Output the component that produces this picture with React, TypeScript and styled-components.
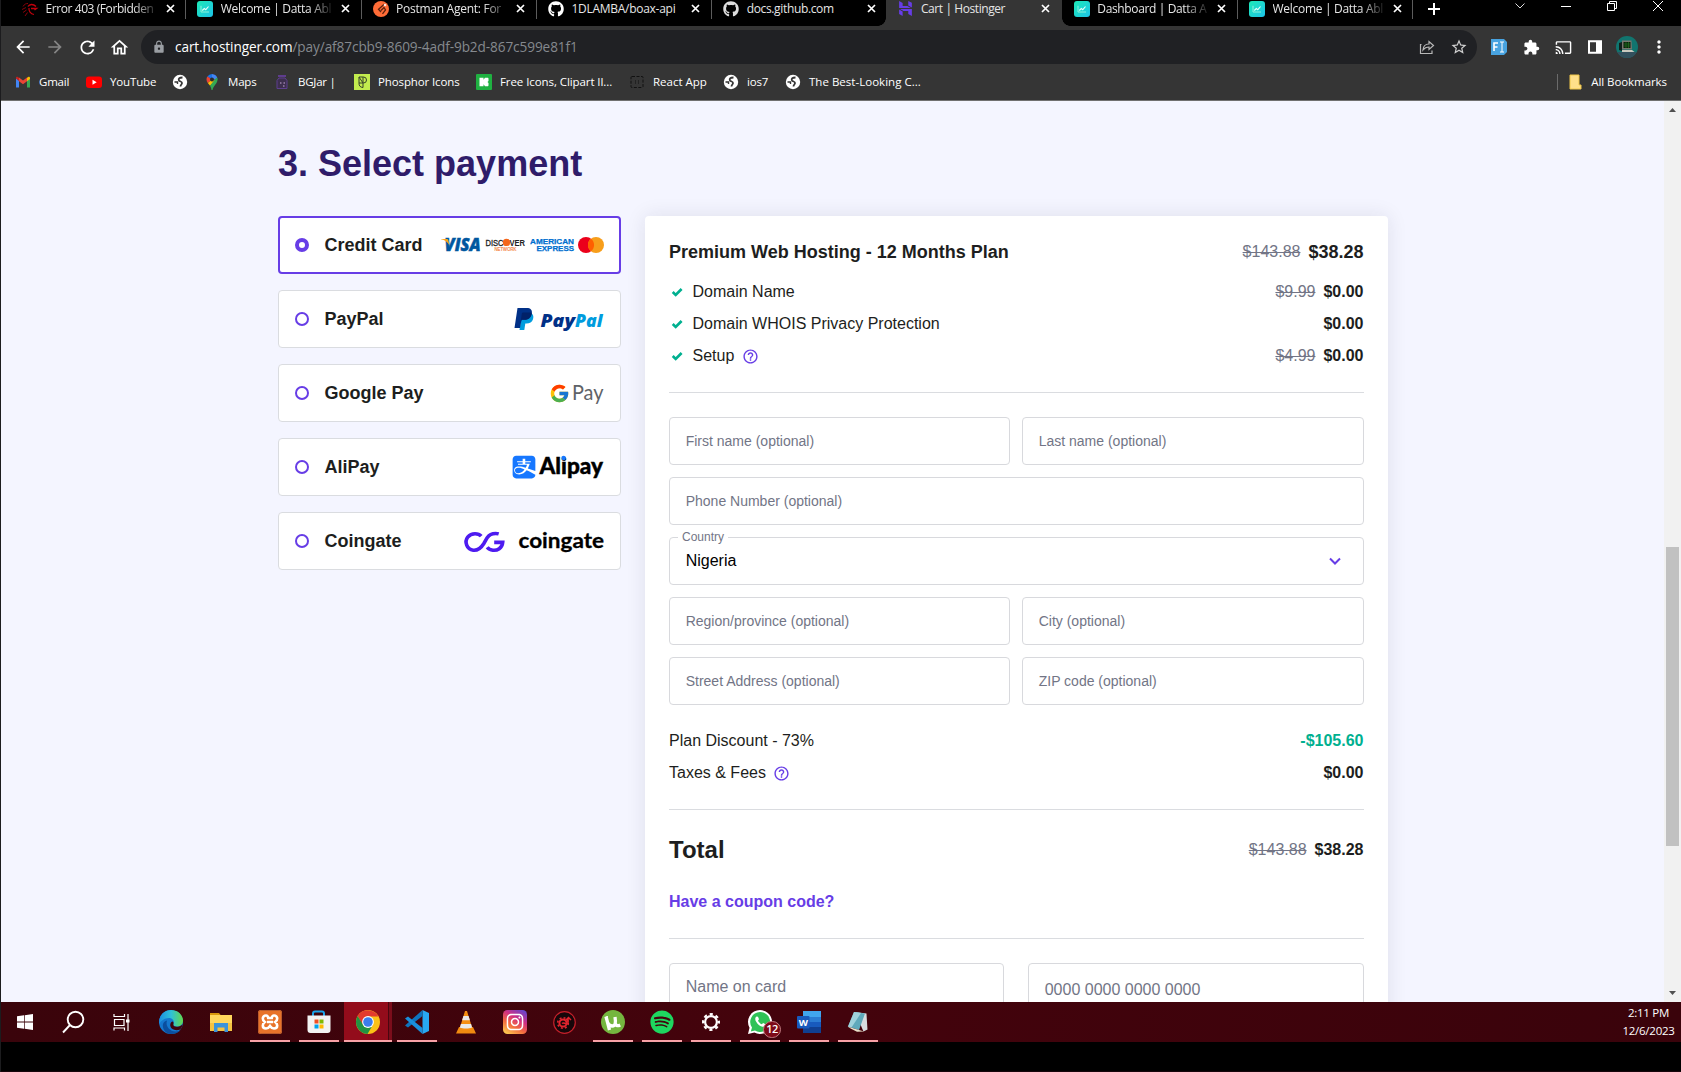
import React from "react";
import styled, { createGlobalStyle, css } from "styled-components";
import { FaGithub, FaSpotify, FaInstagram, FaAlipay } from "react-icons/fa";
import { FcGoogle } from "react-icons/fc";
import { MdArrowBack, MdArrowForward, MdRefresh, MdOutlineHome, MdLock, MdStarBorder, MdExtension, MdCast, MdMoreVert, MdHelpOutline } from "react-icons/md";
import { SiHostinger } from "react-icons/si";

const ui = `"Open Sans", "Noto Sans", sans-serif`;
const arial = `"Liberation Sans", Arial, sans-serif`;

const Global = createGlobalStyle`
  * { box-sizing: border-box; }
  body { margin: 0; background: #000; overflow: hidden; }
  svg { display: block; flex: none; overflow: visible; }
`;

const Screen = styled.div`
  width: 1681px;
  height: 1072px;
  border-left: 1px solid #1c1c1e;
  background: #000;
  display: flex;
  flex-direction: column;
  overflow: hidden;
`;

/* ---------- browser chrome ---------- */
const TabStrip = styled.div`
  height: 26px;
  flex: none;
  display: flex;
  padding-left: 9px;
  background: #000;
`;
const TabBox = styled.div<{ $active?: boolean; $line?: boolean }>`
  width: 175.3px;
  height: 26px;
  flex: none;
  display: flex;
  align-items: center;
  padding: 0 8px 9px 12px;
  position: relative;
  font: 12px/16px ${ui};
  color: #e6e6e6;
  ${(p) =>
    p.$active &&
    css`
      background: #353535;
      &::before,
      &::after {
        content: "";
        position: absolute;
        bottom: 0;
        width: 8px;
        height: 8px;
      }
      &::before { left: -8px; background: radial-gradient(circle at 0 0, transparent 7.5px, #353535 8px); }
      &::after { right: -8px; background: radial-gradient(circle at 100% 0, transparent 7.5px, #353535 8px); }
    `}
  ${(p) =>
    p.$line &&
    css`
      &::after {
        content: "";
        position: absolute;
        top: 0;
        right: -1px;
        width: 1px;
        height: 19px;
        background: #5c5c5c;
      }
    `}
`;
const TabTitle = styled.span<{ $fade?: boolean; $ls: number }>`
  width: 112px;
  margin-left: 7.5px;
  white-space: nowrap;
  letter-spacing: ${(p) => p.$ls}px;
  ${(p) => p.$fade && css`mask-image: linear-gradient(90deg, #000 78%, rgba(0, 0, 0, 0.1) 99%);`}
`;
const CloseX = styled.span`
  width: 9px;
  margin-left: 8px;
`;
const NewTab = styled.div`
  width: 44px;
  display: flex;
  justify-content: center;
  padding-top: 3px;
`;
const WindowButtons = styled.div`
  margin-left: auto;
  display: flex;
  height: 12px;
  align-items: center;
  svg { width: 46px; height: 12px; }
`;
const Toolbar = styled.div`
  height: 42px;
  flex: none;
  background: #353535;
  display: flex;
  align-items: center;
  padding: 4px 0 4px 6px;
  color: #fff;
`;
const ToolButton = styled.span<{ $dim?: boolean }>`
  width: 32px;
  height: 32px;
  display: flex;
  align-items: center;
  justify-content: center;
  color: ${(p) => (p.$dim ? "#858585" : "#fff")};
`;
const Omnibox = styled.div`
  width: 1336px;
  height: 34px;
  margin-left: 6px;
  border-radius: 17px;
  background: #202124;
  display: flex;
  align-items: center;
  padding: 0 2px 0 11px;
  font: 13.6px/20px ${ui};
  color: #9a9ea3;
  b { font-weight: 400; color: #fff; }
`;
const Url = styled.span`
  margin-left: 9px;
  letter-spacing: -0.09px;
  white-space: nowrap;
  color: #85898e;
`;
const OmniActions = styled.div`
  margin-left: auto;
  display: flex;
  color: #c8c8c8;
`;
const Extensions = styled.div`
  display: flex;
  margin-left: 6px;
`;
const Bookmarks = styled.div`
  height: 33px;
  flex: none;
  display: flex;
  align-items: center;
  padding: 0 14px 5px;
  background: #353535;
  border-bottom: 1px solid #707070;
  font: 11.5px/18px ${ui};
  color: #fff;
`;
const Bookmark = styled.div<{ $w: number; $ls?: number }>`
  width: ${(p) => p.$w}px;
  flex: none;
  display: flex;
  align-items: center;
  gap: 8px;
  white-space: nowrap;
  letter-spacing: ${(p) => p.$ls ?? -0.2}px;
`;
const AllBookmarks = styled.div`
  margin-left: auto;
  padding-left: 11px;
  display: flex;
  align-items: center;
  gap: 9px;
  border-left: 1px solid #6b6b6b;
  height: 16px;
  white-space: nowrap;
  letter-spacing: -0.07px;
`;

/* ---------- page ---------- */
const Viewport = styled.div`
  height: 901px;
  flex: none;
  display: flex;
  overflow: hidden;
  background: #f4f5ff;
  font-family: ${arial};
`;
const Page = styled.main`
  flex: 1;
  padding: 41px 0 0 277px;
  color: #1d1e20;
`;
const Heading = styled.h1`
  margin: 0 0 30px;
  font-size: 36px;
  line-height: 44px;
  font-weight: 700;
  color: #2f1c6a;
`;
const Columns = styled.div`
  display: flex;
  gap: 24px;
  align-items: flex-start;
`;
const Methods = styled.div`
  width: 343px;
  display: flex;
  flex-direction: column;
  gap: 16px;
`;
const Method = styled.div<{ $on?: boolean }>`
  height: 58px;
  border: ${(p) => (p.$on ? "2px solid #673de6" : "1px solid #dadce0")};
  border-radius: 4px;
  background: #fff;
  display: flex;
  align-items: center;
  justify-content: space-between;
  padding: 0 ${(p) => (p.$on ? 15 : 16)}px;
`;
const MethodName = styled.div`
  display: flex;
  align-items: center;
  gap: 15.5px;
  font-size: 18px;
  line-height: 24px;
  font-weight: 700;
  white-space: nowrap;
`;
const Radio = styled.span<{ $on?: boolean }>`
  width: 14px;
  height: 14px;
  border-radius: 50%;
  border: ${(p) => (p.$on ? 4 : 2)}px solid #673de6;
`;
const Logos = styled.div`
  display: flex;
  align-items: center;
`;

const Card = styled.section`
  width: 743px;
  height: 900px;
  padding: 24px;
  background: #fff;
  border-radius: 4px;
  box-shadow: 0 0 20px rgba(29, 30, 60, 0.1);
`;
const Line = styled.div<{ $h?: number; $mt?: number }>`
  display: flex;
  align-items: center;
  height: ${(p) => p.$h ?? 24}px;
  margin-top: ${(p) => p.$mt ?? 8}px;
  font-size: 16px;
  line-height: 24px;
  white-space: nowrap;
`;
const PlanName = styled.span`
  font-size: 18px;
  font-weight: 700;
`;
const CheckSlot = styled.span`
  width: 23.5px;
  padding-left: 2px;
`;
const Help = styled(MdHelpOutline)`
  margin-left: 7.5px;
  width: 17px;
  height: 17px;
  color: #673de6;
`;
const Price = styled.div<{ $big?: boolean; $green?: boolean }>`
  margin-left: auto;
  padding-right: 0.5px;
  display: flex;
  align-items: center;
  gap: 8px;
  s { color: #727586; }
  b { font-size: ${(p) => (p.$big ? 18 : 16)}px; color: ${(p) => (p.$green ? "#00b090" : "#1d1e20")}; }
`;
const Divider = styled.div`
  height: 1px;
  margin: 24px 0;
  background: #dadce0;
`;
const Fields = styled.div`
  display: grid;
  grid-template-columns: 341px 342px;
  gap: 12px;
`;
const Field = styled.div<{ $wide?: boolean }>`
  height: 48px;
  border: 1px solid #d8d9dd;
  border-radius: 4px;
  padding: 0 16px 0 15.7px;
  display: flex;
  align-items: center;
  justify-content: space-between;
  font-size: 14px;
  color: #727586;
  position: relative;
  ${(p) => p.$wide && css`grid-column: 1 / -1;`}
`;
const FloatLabel = styled.span`
  position: absolute;
  top: -9px;
  left: 8px;
  padding: 0 4px;
  background: #fff;
  font-size: 12px;
  line-height: 16px;
`;
const FieldValue = styled.span`
  font-size: 16px;
  line-height: 24px;
  margin-top: -1px;
  color: #000;
`;
const TotalLabel = styled.span`
  font-size: 24px;
  line-height: 32px;
  font-weight: 700;
`;
const Coupon = styled.span`
  font-weight: 700;
  color: #673de6;
`;
const CardFields = styled.div`
  display: grid;
  grid-template-columns: 335px 336px;
  gap: 24px;
`;
const CardField = styled.div<{ $pt: number }>`
  height: 60px;
  border: 1px solid #d8d9dd;
  border-radius: 4px;
  padding: ${(p) => p.$pt}px 16px 0 15.7px;
  font-size: 16px;
  line-height: 24px;
  color: #727586;
`;
const Scrollbar = styled.div`
  width: 17px;
  background: #f1f1f1;
  display: flex;
  flex-direction: column;
  align-items: center;
  padding: 7px 0;
`;
const Thumb = styled.div`
  width: 13px;
  height: 299px;
  margin-top: 435px;
  margin-bottom: auto;
  background: #c1c1c1;
`;

/* ---------- taskbar ---------- */
const Taskbar = styled.div`
  height: 40px;
  flex: none;
  display: flex;
  background: linear-gradient(90deg, #3a040b, #44030c 45%, #3a030b);
`;
const TaskItem = styled.div<{ $w?: number; $mode?: "open" | "active" }>`
  width: ${(p) => p.$w ?? 49}px;
  height: 40px;
  display: flex;
  align-items: center;
  justify-content: center;
  padding-right: 1px;
  position: relative;
  ${(p) =>
    p.$mode === "active" &&
    css`
      background: linear-gradient(90deg, #930c1b 44px, #4a0710 44px, #4a0710 45px, #7b0d1b 45px 48px, transparent 48px);
    `}
  ${(p) =>
    p.$mode &&
    css`
      &::after {
        content: "";
        position: absolute;
        left: ${p.$mode === "active" ? 0 : 4}px;
        right: ${p.$mode === "active" ? 1 : 5}px;
        bottom: 0;
        height: 2px;
        background: #f7a1a6;
      }
    `}
`;
const Badge = styled.span`
  position: absolute;
  left: 27px;
  top: 19px;
  width: 18px;
  height: 17px;
  border-radius: 9px;
  border: 1px solid #c07a80;
  background: #7d0a18;
  color: #fff;
  font: 600 11px/14px ${ui};
  text-align: center;
  letter-spacing: -0.5px;
`;
const Clock = styled.div`
  margin-left: auto;
  width: 65px;
  padding-top: 2px;
  text-align: center;
  font: 11.5px/18px ${ui};
  letter-spacing: -0.25px;
  color: #fff;
`;
const Below = styled.div`
  flex: 1;
  background: #000;
  border-bottom: 1px solid #16050a;
`;

/* ---------- small drawings ---------- */
const Cross = () => (
  <svg width="9" height="9" viewBox="0 0 9 9"><path d="M1 1l7 7M8 1L1 8" stroke="#fff" strokeWidth="1.7" /></svg>
);
const Datta = () => (
  <svg width="16" height="16" viewBox="0 0 16 16">
    <defs><linearGradient id="dg" x1="0" x2="1" y2="1"><stop stopColor="#1de9b6" /><stop offset="1" stopColor="#1dc4e9" /></linearGradient></defs>
    <rect width="16" height="16" rx="3" fill="url(#dg)" />
    <path d="M4 4.800v6.200h8" fill="none" stroke="#8ff3dd" strokeWidth="1" /><path d="M5.300 9.500l2-2 1.500 1.200L11.500 5.500" fill="none" stroke="#e4fffa" strokeWidth="1.100" />
  </svg>
);
const ErrorMark = () => (
  <svg width="16" height="16" viewBox="0 0 16 16" fill="none" stroke="#c2000c">
    <path d="M6 5.500C7.500 3 11 2.500 14 5.500M9 7.500h5.500l-2 1.500" strokeWidth="1.400" /><path d="M7 7c-.5 3 1.500 6 5 6.500" strokeWidth="1.200" /><path d="M1 5.500C2.500 3 4 2.500 6 2.500M0 8.500l4-2M1 11.500l3.500-2.500M3 15l2.500-3.500" strokeWidth="1" stroke="#8a0009" />
  </svg>
);
const Postman = () => (
  <svg width="16" height="16" viewBox="0 0 16 16"><circle cx="8" cy="8" r="8" fill="#ff6c37" /><path d="M11.500 3L5.500 8.200 8 11M9.500 12.800l3-3.800-1.500-2.500-3 3" fill="none" stroke="#5a220e" strokeWidth="1.300" /><circle cx="12" cy="4" r="1.300" fill="#ffe3d8" /></svg>
);
const Gmail = () => (
  <svg width="16" height="16" viewBox="0 0 16 16">
    <path d="M1 4v9.500h3V6.500z" fill="#4285f4" /><path d="M15 4v9.500h-3V6.500z" fill="#34a853" />
    <path d="M1 4.500L4 7V3.800L2.800 2.900C2 2.400 1 3 1 3.900z" fill="#c5221f" /><path d="M4 3.600l4 3 4-3V7.200l-4 3-4-3z" fill="#ea4335" /><path d="M12 7.200l3-2.300V3.900c0-1-1-1.500-1.800-1L12 3.800z" fill="#fbbc04" />
  </svg>
);
const YouTube = () => (
  <svg width="16" height="16" viewBox="0 0 16 16"><rect y="2.500" width="16" height="11.500" rx="3" fill="#f00" /><path d="M6.500 5.700l4.200 2.500-4.200 2.500z" fill="#fff" /></svg>
);
const Globe = () => (
  <svg width="16" height="16" viewBox="0 0 16 16"><circle cx="8" cy="8" r="7.200" fill="#fff" /><path d="M10.500 3.500C7.500 3.500 6 4.500 7 6.500c.8 1.500 3 .5 3 2.500 0 1.500-1.500 1.500-1.500 3.500" fill="none" stroke="#353535" strokeWidth="1.800" /><path d="M2.500 8h3v2" stroke="#353535" strokeWidth="1.400" fill="none" /></svg>
);
const MapsPin = () => (
  <svg width="16" height="16" viewBox="0 0 16 16">
    <path d="M8 0a5.500 5.500 0 0 1 5.500 5.500H8z" fill="#4285f4" /><path d="M8 0a5.500 5.500 0 0 0-4.600 2.500L8 5.500z" fill="#1a73e8" />
    <path d="M3.400 2.500C2 4.500 2.300 7 3.800 9L8 5.500z" fill="#ea4335" /><path d="M3.800 9l2.300 2.800L11.500 6 8 5.500z" fill="#fbbc04" />
    <path d="M13.500 5.500C13.500 10 9.500 11 8.500 16h-1c-.2-1.800-.7-3-1.500-4.200L12.500 3.500c.7.700 1 1.300 1 2z" fill="#34a853" /><circle cx="8" cy="5.500" r="2" fill="#2b2b2b" />
  </svg>
);
const Jar = () => (
  <svg width="16" height="16" viewBox="0 0 16 16"><path d="M4 1h8v2H4z" fill="#5e3d8c" /><path d="M5 4h6l2 2.500v8H3v-8z" fill="#3d2f4e" stroke="#5e3f90" /><path d="M6 9h1.500M9.500 9H11M9 12h1.500" stroke="#c9a8d8" /></svg>
);
const Phosphor = () => (
  <svg width="16" height="16" viewBox="0 0 16 16"><rect width="16" height="16" fill="#c2ec4e" /><path d="M5 3h4.500a2.800 2.800 0 0 1 0 6H5zM5 3l4 6v4.500A4.300 4.300 0 0 1 5 9M9 3v6" fill="none" stroke="#35402b" strokeWidth="1" /></svg>
);
const FreeIcons = () => (
  <svg width="16" height="16" viewBox="0 0 16 16"><rect width="16" height="16" rx="1" fill="#1fb141" /><path d="M3.500 3.800h4v2l1.500-2h3l.5.700v2.500l-1 1 1 1v2.500l-.5.700h-3l-1.500-2v2h-4z" fill="#fff" /></svg>
);
const ReactApp = () => (
  <svg width="16" height="16" viewBox="0 0 16 16" fill="none" stroke="#111"><rect x="2" y="2.500" width="12" height="11" rx="1" strokeDasharray="3 1.500" /><path d="M6.500 6v4M9.500 6v4" stroke="#222" /></svg>
);
const FolderMark = () => (
  <svg width="13" height="16" viewBox="0 0 13 16"><path d="M1 1h9v10l2 0v4H1z" fill="#ffe08a" stroke="#f0c748" /></svg>
);
const Share = () => (
  <svg width="18" height="18" viewBox="0 0 18 18" fill="none" stroke="#b8b8b8" strokeWidth="1.200"><path d="M3.500 6.500H2.500v9H14v-3" /><path d="M5 12c.3-4 2.500-6 6-6V3.500l4.500 4-4.500 4V9C8.500 9 6.500 10 5 12z" /></svg>
);
const FieldExt = () => (
  <svg width="16" height="16" viewBox="0 0 16 16"><path d="M0 0h13l3 3v10l-3 3H0z" fill="#48a3e0" /><path d="M3 12V4h4M3 8h3.500" stroke="#fff" strokeWidth="1.600" fill="none" /><path d="M9 3h4M9 13h4M11 3v10" stroke="#fff" strokeWidth="1" /></svg>
);
const Panel = () => (
  <svg width="16" height="16" viewBox="0 0 16 16"><path d="M2 2.200h12v11.600H2z" fill="none" stroke="#fff" strokeWidth="2" /><path d="M9 2h5v12H9z" fill="#fff" /></svg>
);
const Avatar = () => (
  <svg width="22" height="22" viewBox="0 0 22 22">
    <defs><clipPath id="av"><circle cx="11" cy="11" r="11" /></clipPath></defs>
    <g clipPath="url(#av)"><path d="M0 0h22v22H0z" fill="#11756f" /><path d="M0 16h22v6H0z" fill="#33505d" /><path d="M6 4.500h9.500l.5 9H6z" fill="#77776e" /><path d="M7.500 6h7v6h-7z" fill="#0b1f0b" /><path d="M8 8h6M8 10h6M10 6v6M12.500 6v6" stroke="#1f6d1f" strokeWidth=".8" /><path d="M6 14h10l2.500 2H6z" fill="#c9c9bf" /><path d="M3 7l3-1v9l-3-1z" fill="#10201c" /></g>
  </svg>
);
const Check = () => (
  <svg width="12" height="10" viewBox="0 0 12 10"><path d="M1.700 5l3 2.900L10.600 2" fill="none" stroke="#00b090" strokeWidth="2.700" /></svg>
);

const CardBrands = () => (
  <svg width="163" height="18" viewBox="0 0 163 18" fontFamily="Liberation Sans, Arial, sans-serif" fontWeight="700">
    <text x="3.500" y="15.300" fontSize="17" fontStyle="italic" fontFamily="Open Sans, sans-serif" fontWeight="800" fill="#00579f" stroke="#00579f" strokeWidth=".5" textLength="36" lengthAdjust="spacingAndGlyphs">VISA</text>
    <path d="M0 3h5.500c1 0 1.600.4 1.900 1.400L8.500 9.500C7 6.300 4 4 0 3.200z" fill="#faa61a" />
    <text x="44.500" y="9.800" fontSize="8.600" fontWeight="400" stroke="#222" strokeWidth=".3" fill="#222" textLength="18" lengthAdjust="spacingAndGlyphs">DISC</text>
    <circle cx="65.500" cy="6.400" r="3.700" fill="#f4661b" />
    <text x="68.500" y="9.800" fontSize="8.600" fill="#222" textLength="15.500" lengthAdjust="spacingAndGlyphs">VER</text>
    <text x="53.500" y="15" fontSize="4.600" fontWeight="400" fill="#f47b36" stroke="#f47b36" strokeWidth=".15" textLength="22" lengthAdjust="spacingAndGlyphs">NETWORK</text>
    <text x="89" y="8.300" fontSize="7.400" fill="#006fcf" stroke="#006fcf" strokeWidth=".25" textLength="44" lengthAdjust="spacingAndGlyphs">AMERICAN</text>
    <text x="95.500" y="15.400" fontSize="7.400" fill="#006fcf" stroke="#006fcf" strokeWidth=".25" textLength="37.500" lengthAdjust="spacingAndGlyphs">EXPRESS</text>
    <circle cx="145" cy="9" r="8" fill="#eb001b" /><circle cx="155" cy="9" r="8" fill="#f79e1b" /><path d="M150 2.700a8 8 0 0 1 0 12.600 8 8 0 0 1 0-12.600z" fill="#ff5f00" />
  </svg>
);
const PayPalLogo = () => (
  <svg width="90" height="24" viewBox="0 0 90 24" fontFamily="Open Sans, sans-serif" fontWeight="800" fontStyle="italic">
    <path d="M17 6c2.500 1.300 2.800 3.700 2 6.200-1 3-3.300 4.200-6.500 4.200h-1.200l-1 6.600H5.500L7.500 9z" fill="#009cde" />
    <path d="M3.500 1h9.300c3.600 0 5.800 2 5 5.800-.9 4.400-3.700 6-7.700 6H7.600L6 21H.5z" fill="#003087" />
    <path d="M7.800 6.800C8 6 8.500 5.500 9.400 5.500h6c.9 0 1.700.1 2.400.4-.7 4.900-3.500 6.900-7.700 6.900H7.600L6.500 16z" fill="#012169" />
    <text x="26.500" y="19.500" fontSize="17.500" fill="#003087" textLength="34.500" lengthAdjust="spacingAndGlyphs">Pay</text>
    <text x="61" y="19.500" fontSize="17.500" fill="#009cde" textLength="27.500" lengthAdjust="spacingAndGlyphs">Pal</text>
  </svg>
);
const GooglePayLogo = () => (
  <>
    <FcGoogle size={21} />
    <svg width="34" height="24" viewBox="0 0 34 24" fontFamily="Lato, sans-serif"><text x="2" y="18.700" fontSize="21.500" fill="#5f6368" textLength="31.500" lengthAdjust="spacingAndGlyphs">Pay</text></svg>
  </>
);
const AlipayLogo = () => (
  <>
    <FaAlipay size={26} color="#1677ff" style={{ marginRight: 1 }} />
    <svg width="66" height="28" viewBox="0 0 66 28" fontFamily="Lato, sans-serif" fontWeight="900"><text x="1.500" y="20.500" fontSize="22" fill="#000" stroke="#000" strokeWidth=".4" textLength="63.500" lengthAdjust="spacingAndGlyphs">Alipay</text><circle cx="25.600" cy="5" r="2.300" fill="#1677ff" /></svg>
  </>
);
const CoingateLogo = () => (
  <svg width="142" height="28" viewBox="0 0 142 28" fontFamily="Lato, sans-serif">
    <g fill="none" stroke="#4d1bf0" strokeWidth="3.600" transform="translate(.7 .7)">
      <path d="M18.500 8.500C16 5.500 9 4.500 5 9.500c-3.500 4.500-1 12.300 5.500 13 5 .5 8-2.500 10.500-6.500l3.500-6c2-3 5-4.200 8.500-4.200 1 0 2 .1 3 .4" />
      <path d="M24.500 19.500c2.500 3.500 8.500 4 12 1.500 2.300-1.600 3.300-4 3.500-6.300h-8.500" />
    </g>
    <text x="56.500" y="20.500" fontSize="20.500" fontWeight="700" fill="#000" stroke="#000" strokeWidth=".3" textLength="85.500" lengthAdjust="spacingAndGlyphs">coingate</text>
  </svg>
);

/* ---------- taskbar drawings ---------- */
const Windows = () => (
  <svg width="16" height="16" viewBox="0 0 16 16" fill="#fff"><path d="M0 2.300L7 1.300v6.300H0zM7.700 1.200L16 0v7.600H7.700zM0 8.400h7v6.400l-7-1zM7.700 8.400H16V16l-8.300-1.200z" /></svg>
);
const Magnifier = () => (
  <svg width="24" height="24" viewBox="0 0 24 24" fill="none" stroke="#fff" strokeWidth="1.900"><circle cx="14.500" cy="9.500" r="7.800" /><path d="M9 15l-7 7.500" /></svg>
);
const TaskView = () => (
  <svg width="17" height="17" viewBox="0 0 17 17" fill="none" stroke="#fff" strokeWidth="1.200"><path d="M1 0v2.500h10.500V0M1 16.500V14h10.500v2.500M1.500 5.500h9.500v6H1.500zM15 0v17" /><path d="M13 5.500h3.500v3H13z" fill="#fff" stroke="none" /></svg>
);
const Edge = () => (
  <svg width="24" height="24" viewBox="0 0 24 24">
    <defs><linearGradient id="eg" x1="0" x2="1"><stop stopColor="#1b8fe0" /><stop offset=".5" stopColor="#2fc1d8" /><stop offset="1" stopColor="#63d94b" /></linearGradient></defs>
    <circle cx="12" cy="12" r="12" fill="#1578cf" />
    <path d="M.3 10C1.500 4 6 0 12 0c7 0 12 5 12 10.500 0 4-3 6-6 6s-4.500-1.300-3.500-2.800c1.300-2-.5-5.700-4.500-5.700C5.500 8 1.500 11 .3 14z" fill="url(#eg)" />
    <path d="M8 10.500c-2 6 3 11 9 11 2.500 0 4-1 5-2-2 3-6 4.500-10 4.500C6 24 3 18 4 14c.6-2 2-3 4-3.500z" fill="#0b4f9f" />
    <path d="M14.500 13.700c-.8 1.800 1 3.300 4 3 2-.2 3.700-1 5-2.400-.2 2.500-1.300 4.300-2.300 5.200-5 2-10-.5-10-4.500 0-2 1.300-3.300 2.500-3.500.7.500 1 1.200.8 2.200z" fill="#40040c" />
  </svg>
);
const Explorer = () => (
  <svg width="22" height="19" viewBox="0 0 22 19"><path d="M0 0h9l2 2.500H0z" fill="#d8960b" /><path d="M0 2h22v16H0z" fill="#ffd65c" /><path d="M0 10h22v8H0z" fill="#f4c242" /><path d="M4 19v-9h14v9h-3.500v-4.500h-7V19z" fill="#3b93d9" /></svg>
);
const Xampp = () => (
  <svg width="24" height="24" viewBox="0 0 24 24"><rect width="24" height="24" rx="2.500" fill="#e8732a" /><rect x=".5" y=".5" width="23" height="23" rx="2" fill="none" stroke="#b95b2c" /><path d="M8 5.500c-2 0-3.200 1.300-3.200 3 0 1.500.8 2.600 2 3.500-1.200.9-2 2-2 3.500 0 1.700 1.200 3 3.200 3 1.700 0 3-1 4-2.500 1 1.500 2.300 2.500 4 2.500 2 0 3.200-1.300 3.200-3 0-1.500-.8-2.600-2-3.500 1.200-.9 2-2 2-3.500 0-1.700-1.200-3-3.200-3-1.500 0-2 1-2.200 2.500h-3.600C10 6.500 9.500 5.500 8 5.500zM9 12h6" fill="none" stroke="#fff" strokeWidth="2.600" /></svg>
);
const Store = () => (
  <svg width="24" height="24" viewBox="0 0 24 24"><path d="M6 6V3.500C6 2 7 1.500 8 1.500h7c1 0 2 .5 2 2V6" fill="none" stroke="#1ba5ea" strokeWidth="2" /><path d="M.5 5.500h23V20a3 3 0 0 1-3 3h-17a3 3 0 0 1-3-3z" fill="#f3f3f3" /><path d="M7.500 9.500h4v4h-4z" fill="#f25022" /><path d="M12.500 9.500h4v4h-4z" fill="#7fba00" /><path d="M7.500 14.500h4v4h-4z" fill="#00a4ef" /><path d="M12.500 14.500h4v4h-4z" fill="#ffb900" /></svg>
);
const Chrome = () => (
  <svg width="24" height="24" viewBox="0 0 24 24"><circle cx="12" cy="12" r="12" fill="#fbc116" /><path d="M1.600 6A12 12 0 0 1 22.400 6.500H12L6.800 15z" fill="#e33b2e" /><path d="M1.600 6a12 12 0 0 0 9.900 18l5.300-9L12 17.500 7.200 15z" fill="#229342" /><circle cx="12" cy="12" r="5.900" fill="#fff" /><circle cx="12" cy="12" r="4.800" fill="#3b7ded" /></svg>
);
const VsCode = () => (
  <svg width="24" height="24" viewBox="0 0 24 24"><path d="M17.500 0L24 3v18l-6.500 3z" fill="#28a8f2" /><path d="M17.500 0v6L3 17.500 0 15.500z" fill="#0e74bd" /><path d="M17.500 24v-6L3 6.500 0 8.500z" fill="#1a8fdb" /></svg>
);
const Vlc = () => (
  <svg width="20" height="23" viewBox="0 0 20 23"><path d="M3 16h14l3 6.500H0z" fill="#f08a10" /><path d="M9 0h2l5.500 18c-3 1.800-10 1.800-13 0z" fill="#f58e12" /><path d="M7.400 5h5.200l1.300 4.200H6.100zM4.900 13h10.200l1 3.400c-3 1.500-9.200 1.500-12.200 0z" fill="#e9e9e9" /></svg>
);
const Instagram = () => (
  <svg width="24" height="24" viewBox="0 0 24 24">
    <defs><linearGradient id="ig" x1=".2" y1="1" x2=".8" y2="0"><stop stopColor="#fdc64f" /><stop offset=".35" stopColor="#f3693f" /><stop offset=".65" stopColor="#d02f82" /><stop offset="1" stopColor="#6a45cb" /></linearGradient></defs>
    <rect width="24" height="24" rx="4.500" fill="url(#ig)" /><g transform="translate(2.500 2.500)"><FaInstagram size={19} color="#fff" /></g>
  </svg>
);
const RedGear = () => (
  <svg width="23" height="23" viewBox="0 0 23 23" fill="none"><circle cx="11.500" cy="11.500" r="10.800" fill="#16070a" stroke="#c4202a" strokeWidth="1.200" /><circle cx="10" cy="12" r="3.600" stroke="#e0242e" strokeWidth="2" /><circle cx="10" cy="12" r="5.300" stroke="#e0242e" strokeWidth="1.600" strokeDasharray="2 2.160" /><path d="M9 12.500c2-2 3 1.500 6-.5V7.500M13 9l2.500-2.500L18 9" stroke="#e0242e" strokeWidth="1.500" /></svg>
);
const UTorrent = () => (
  <svg width="24" height="24" viewBox="0 0 24 24"><circle cx="12" cy="12" r="12" fill="#75b63f" /><path d="M5 6.500c1.500 6 2 9 6 9.500 3.500.2 4-3 3-9M14.200 13c.6 2.500 2 3.500 5 2M5 6.500L8.500 20" fill="none" stroke="#fff" strokeWidth="3.300" /></svg>
);
const Gear = () => (
  <svg width="20" height="20" viewBox="0 0 20 20" fill="none" stroke="#fff"><circle cx="10" cy="10" r="5.900" strokeWidth="2.200" /><circle cx="10" cy="10" r="7.900" strokeWidth="2.200" strokeDasharray="3.200 3.005" strokeDashoffset="1.600" /></svg>
);
const WhatsApp = () => (
  <svg width="24" height="24" viewBox="0 0 24 24"><path d="M12 0a12 12 0 1 1-5.600 22.600L0 24l1.500-6.200A12 12 0 0 1 12 0z" fill="#fff" /><path d="M12 2a10 10 0 1 1-5 18.600L2.800 21.500 4 17.600A10 10 0 0 1 12 2z" fill="#2fc256" /><path d="M8.500 6.500c-1.500 1-1.700 3-.3 5.300 1.600 2.700 4 4.700 6.500 5 1.600.2 3-.8 3.200-2.300l-2.700-1.500-1.500 1.300c-1.500-.6-3-2-3.700-3.500l1-1.500-1-2.600z" fill="#fff" /></svg>
);
const Word = () => (
  <svg width="24" height="24" viewBox="0 0 24 24"><path d="M6 1h18v6H6z" fill="#41a5ee" /><path d="M6 7h18v5.500H6z" fill="#2b7cd3" /><path d="M6 12h18v5H6z" fill="#185abd" /><path d="M6 17h18v6H6z" fill="#103f91" /><rect y="6" width="12.500" height="12.500" rx="1" fill="#185abd" /><text x="1.700" y="15.700" fontSize="9.500" fontWeight="700" fontFamily="Open Sans, sans-serif" fill="#fff">W</text></svg>
);
const Notepad = () => (
  <svg width="24" height="24" viewBox="0 0 24 24"><path d="M9 2l11.500 1.500 1 16-4 2z" fill="#d9dde0" /><path d="M8 2l11 1.500L13 20 2 16.500z" fill="#5fa9bb" /><path d="M8 2l7 1L5.500 17.500 2 16.500z" fill="#9fd2dc" /><path d="M1.500 16.500L13 20l5 1.500-7 .3-6-3z" fill="#e8e0c8" /></svg>
);

/* ---------- data ---------- */
const tabs = [
  { icon: <ErrorMark />, title: "Error 403 (Forbidden", fade: true, ls: -0.42, line: true },
  { icon: <Datta />, title: "Welcome | Datta Abl", fade: true, ls: -0.3, line: true },
  { icon: <Postman />, title: "Postman Agent: For", fade: true, ls: -0.27, line: true },
  { icon: <FaGithub size={16} color="#fff" />, title: "1DLAMBA/boax-api", ls: -0.27, line: true },
  { icon: <FaGithub size={16} color="#ddd" />, title: "docs.github.com", ls: -0.35 },
  { icon: <SiHostinger size={15} color="#673de6" />, title: "Cart | Hostinger", ls: -0.42, active: true },
  { icon: <Datta />, title: "Dashboard | Datta A", fade: true, ls: -0.36, line: true },
  { icon: <Datta />, title: "Welcome | Datta Abl", fade: true, ls: -0.3, line: true },
];
const bookmarks = [
  { icon: <Gmail />, w: 71, text: "Gmail" },
  { icon: <YouTube />, w: 86, text: "YouTube", ls: -0.15 },
  { icon: <Globe />, w: 32, text: "" },
  { icon: <MapsPin />, w: 70, text: "Maps" },
  { icon: <Jar />, w: 80, text: "BGJar |", ls: -0.25 },
  { icon: <Phosphor />, w: 122, text: "Phosphor Icons", ls: -0.12 },
  { icon: <FreeIcons />, w: 153, text: "Free Icons, Clipart Il...", ls: -0.08 },
  { icon: <ReactApp />, w: 94, text: "React App", ls: 0 },
  { icon: <Globe />, w: 62, text: "ios7" },
  { icon: <Globe />, w: 150, text: "The Best-Looking C...", ls: 0.02 },
];
const methods = [
  { name: "Credit Card", logo: <CardBrands />, on: true },
  { name: "PayPal", logo: <PayPalLogo /> },
  { name: "Google Pay", logo: <GooglePayLogo /> },
  { name: "AliPay", logo: <AlipayLogo /> },
  { name: "Coingate", logo: <CoingateLogo /> },
];
const features = [
  { name: "Domain Name", old: "$9.99" },
  { name: "Domain WHOIS Privacy Protection" },
  { name: "Setup", old: "$4.99", help: true },
];
const tasks: { icon: React.ReactNode; w?: number; mode?: "open" | "active"; badge?: string }[] = [
  { icon: <Windows />, w: 49 },
  { icon: <Magnifier />, w: 47 },
  { icon: <TaskView />, w: 49 },
  { icon: <Edge />, w: 51 },
  { icon: <Explorer /> },
  { icon: <Xampp />, mode: "open" },
  { icon: <Store />, mode: "open" },
  { icon: <Chrome />, mode: "active" },
  { icon: <VsCode />, mode: "open" },
  { icon: <Vlc /> },
  { icon: <Instagram /> },
  { icon: <RedGear /> },
  { icon: <UTorrent />, mode: "open" },
  { icon: <FaSpotify size={24} color="#1ed760" />, mode: "open" },
  { icon: <Gear />, mode: "open" },
  { icon: <WhatsApp />, mode: "open", badge: "12" },
  { icon: <Word />, mode: "open" },
  { icon: <Notepad />, mode: "open" },
];

export default function App() {
  return (
    <Screen>
      <Global />
      <TabStrip>
        {tabs.map((t, i) => (
          <TabBox key={i} $active={t.active} $line={t.line}>
            {t.icon}
            <TabTitle $fade={t.fade} $ls={t.ls}>{t.title}</TabTitle>
            <CloseX><Cross /></CloseX>
          </TabBox>
        ))}
        <NewTab>
          <svg width="12" height="12" viewBox="0 0 12 12"><path d="M6 0v12M0 6h12" stroke="#fff" strokeWidth="2" /></svg>
        </NewTab>
        <WindowButtons>
          <svg viewBox="0 0 46 12" fill="none" stroke="#ddd"><path d="M18.500 3.500l4.500 4.500 4.500-4.500" /></svg>
          <svg viewBox="0 0 46 12" fill="none" stroke="#fff"><path d="M18 6.500h10" /></svg>
          <svg viewBox="0 0 46 12" fill="none" stroke="#fff"><path d="M18.500 3.500h7v7h-7zM20.500 3V1.500h7v7H26" /></svg>
          <svg viewBox="0 0 46 12" fill="none" stroke="#fff"><path d="M18 1l10 10M28 1L18 11" /></svg>
        </WindowButtons>
      </TabStrip>
      <Toolbar>
        <ToolButton><MdArrowBack size={20} /></ToolButton>
        <ToolButton $dim><MdArrowForward size={20} /></ToolButton>
        <ToolButton><MdRefresh size={21} /></ToolButton>
        <ToolButton><MdOutlineHome size={21} /></ToolButton>
        <Omnibox>
          <MdLock size={14} />
          <Url><b>cart.hostinger.com</b>/pay/af87cbb9-8609-4adf-9b2d-867c599e81f1</Url>
          <OmniActions>
            <ToolButton><Share /></ToolButton>
            <ToolButton><MdStarBorder size={18} color="#d0d0d0" /></ToolButton>
          </OmniActions>
        </Omnibox>
        <Extensions>
          <ToolButton><FieldExt /></ToolButton>
          <ToolButton><MdExtension size={17} /></ToolButton>
          <ToolButton><MdCast size={17} /></ToolButton>
          <ToolButton><Panel /></ToolButton>
          <ToolButton><Avatar /></ToolButton>
          <ToolButton><MdMoreVert size={20} /></ToolButton>
        </Extensions>
      </Toolbar>
      <Bookmarks>
        {bookmarks.map((b, i) => (
          <Bookmark key={i} $w={b.w} $ls={b.ls}>{b.icon}{b.text}</Bookmark>
        ))}
        <AllBookmarks><FolderMark />All Bookmarks</AllBookmarks>
      </Bookmarks>

      <Viewport>
        <Page>
          <Heading>3. Select payment</Heading>
          <Columns>
            <Methods>
              {methods.map((m) => (
                <Method key={m.name} $on={m.on}>
                  <MethodName><Radio $on={m.on} />{m.name}</MethodName>
                  <Logos>{m.logo}</Logos>
                </Method>
              ))}
            </Methods>
            <Card>
              <Line $mt={0}>
                <PlanName>Premium Web Hosting - 12 Months Plan</PlanName>
                <Price $big><s>$143.88</s><b>$38.28</b></Price>
              </Line>
              {features.map((f, i) => (
                <Line key={f.name} $mt={i ? 8 : 16}>
                  <CheckSlot><Check /></CheckSlot>
                  {f.name}
                  {f.help && <Help />}
                  <Price>{f.old && <s>{f.old}</s>}<b>$0.00</b></Price>
                </Line>
              ))}
              <Divider />
              <Fields>
                <Field>First name (optional)</Field>
                <Field>Last name (optional)</Field>
                <Field $wide>Phone Number (optional)</Field>
                <Field $wide>
                  <FloatLabel>Country</FloatLabel>
                  <FieldValue>Nigeria</FieldValue>
                  <svg width="24" height="12" viewBox="0 0 24 12"><path d="M7 3.500l5 5 5-5" fill="none" stroke="#673de6" strokeWidth="2" /></svg>
                </Field>
                <Field>Region/province (optional)</Field>
                <Field>City (optional)</Field>
                <Field>Street Address (optional)</Field>
                <Field>ZIP code (optional)</Field>
              </Fields>
              <Line $mt={24}>Plan Discount - 73%<Price $green><b>-$105.60</b></Price></Line>
              <Line>Taxes &amp; Fees<Help /><Price><b>$0.00</b></Price></Line>
              <Divider />
              <Line $h={32} $mt={0}>
                <TotalLabel>Total</TotalLabel>
                <Price><s>$143.88</s><b>$38.28</b></Price>
              </Line>
              <Line $mt={24}><Coupon>Have a coupon code?</Coupon></Line>
              <Divider />
              <CardFields>
                <CardField $pt={11}>Name on card</CardField>
                <CardField $pt={14}>0000 0000 0000 0000</CardField>
              </CardFields>
            </Card>
          </Columns>
        </Page>
        <Scrollbar>
          <svg width="7" height="4" viewBox="0 0 7 4"><path d="M0 4l3.500-4L7 4z" fill="#505050" /></svg>
          <Thumb />
          <svg width="7" height="4" viewBox="0 0 7 4"><path d="M0 0l3.500 4L7 0z" fill="#505050" /></svg>
        </Scrollbar>
      </Viewport>

      <Taskbar>
        {tasks.map((t, i) => (
          <TaskItem key={i} $w={t.w} $mode={t.mode}>
            {t.icon}
            {t.badge && <Badge>{t.badge}</Badge>}
          </TaskItem>
        ))}
        <Clock>2:11 PM<br />12/6/2023</Clock>
      </Taskbar>
      <Below />
    </Screen>
  );
}
